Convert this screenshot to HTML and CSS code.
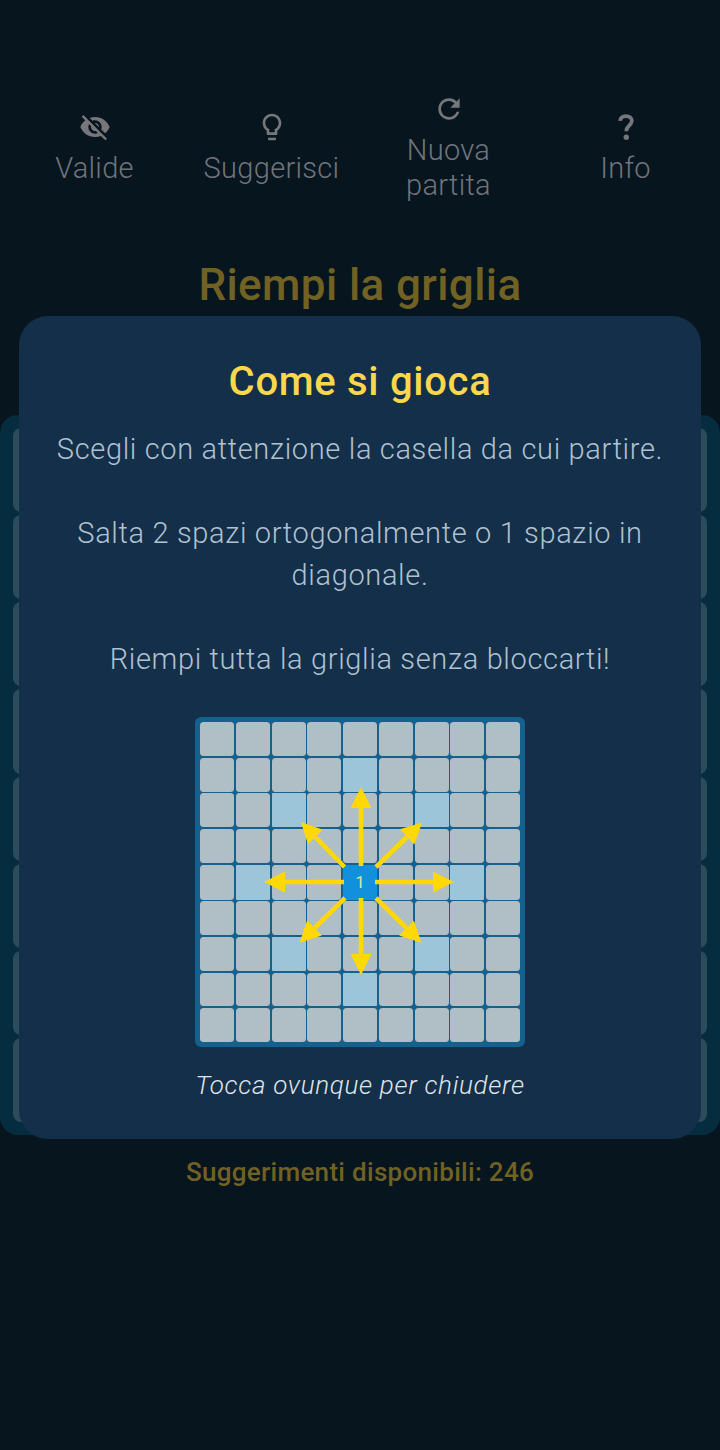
FILE: index.html
```html
<!DOCTYPE html>
<html lang="it">
<head>
    <meta charset="UTF-8">
    <meta name="viewport" content="width=device-width, initial-scale=1.0">
    <title>Riempi la griglia</title>
    <link rel="stylesheet" href="styles.css">
</head>
<body>
    <div class="game">
        <div class="toolbar">
            <button class="tool">
                <svg class="icon" viewBox="0 0 24 24"><path d="M12 7c2.76 0 5 2.24 5 5 0 .65-.13 1.26-.36 1.83l2.92 2.92c1.51-1.26 2.7-2.89 3.43-4.75-1.73-4.39-6-7.5-11-7.5-1.4 0-2.74.25-3.98.7l2.16 2.16C10.74 7.13 11.35 7 12 7zM2 4.27l2.28 2.28.46.46C3.08 8.3 1.78 10.02 1 12c1.73 4.39 6 7.5 11 7.5 1.55 0 3.03-.3 4.38-.84l.42.42L19.73 22 21 20.73 3.27 3 2 4.27zM7.53 9.8l1.55 1.55c-.05.21-.08.43-.08.65 0 1.66 1.34 3 3 3 .22 0 .44-.03.65-.08l1.55 1.55c-.67.33-1.41.53-2.2.53-2.76 0-5-2.24-5-5 0-.79.2-1.53.53-2.2zm4.31-.78l3.15 3.15.02-.16c0-1.66-1.34-3-3-3l-.17.01z"/></svg>
                <span>Valide</span>
            </button>
            <button class="tool">
                <svg class="icon" viewBox="0 0 24 24"><path d="M9 21c0 .55.45 1 1 1h4c.55 0 1-.45 1-1v-1H9v1zm3-19C8.14 2 5 5.14 5 9c0 2.38 1.19 4.47 3 5.74V17c0 .55.45 1 1 1h6c.55 0 1-.45 1-1v-2.26c1.81-1.27 3-3.36 3-5.74 0-3.86-3.14-7-7-7zm2.85 11.1l-.85.6V16h-4v-2.3l-.85-.6C7.8 12.16 7 10.63 7 9c0-2.76 2.24-5 5-5s5 2.24 5 5c0 1.63-.8 3.16-2.15 4.1z"/></svg>
                <span>Suggerisci</span>
            </button>
            <button class="tool">
                <svg class="icon" viewBox="0 0 24 24"><path d="M17.65 6.35C16.2 4.9 14.21 4 12 4c-4.42 0-7.99 3.58-7.99 8s3.57 8 7.99 8c3.73 0 6.84-2.55 7.73-6h-2.08c-.82 2.33-3.04 4-5.65 4-3.31 0-6-2.69-6-6s2.69-6 6-6c1.66 0 3.14.69 4.22 1.78L13 11h7V4l-2.35 2.35z"/></svg>
                <span>Nuova<br>partita</span>
            </button>
            <button class="tool">
                <svg class="icon" viewBox="0 0 24 24"><path class="question" d="M7.6 7.4C7.8 4.9 9.6 3.8 12 3.8c2.6 0 4.4 1.400 4.4 3.600 0 3.100-4.200 3.800-4.200 7.700"/><circle cx="12.200" cy="19.700" r="2"/></svg>
                <span>Info</span>
            </button>
        </div>
        <h1 class="title">Riempi la griglia</h1>
        <div class="board" id="board"></div>
        <p class="hints">Suggerimenti disponibili: 246</p>
    </div>

    <div class="overlay">
        <div class="dialog">
            <h2 class="dialog-title">Come si gioca</h2>
            <div class="dialog-text">
                <p>Scegli con attenzione la casella da cui partire.</p>
                <p>Salta 2 spazi ortogonalmente o 1 spazio in diagonale.</p>
                <p>Riempi tutta la griglia senza bloccarti!</p>
            </div>
            <div class="demo">
                <div class="demo-grid" id="demo"></div>
                <svg class="arrows" viewBox="0 0 330 330">
                    <defs>
                        <marker id="head" markerUnits="userSpaceOnUse" markerWidth="22" markerHeight="22" refX="0" refY="11" orient="auto">
                            <path d="M0 .5L21 11L0 21.5z"/>
                        </marker>
                    </defs>
                    <path class="arrow" d="M166 149V91"/>
                    <path class="arrow" d="M166 181V237"/>
                    <path class="arrow" d="M149 165H90"/>
                    <path class="arrow" d="M180 165H238"/>
                    <path class="arrow" d="M149.500 150L120.500 120"/>
                    <path class="arrow" d="M181 150L212 120"/>
                    <path class="arrow" d="M150 181L119.500 211"/>
                    <path class="arrow" d="M181 181L211.500 211"/>
                </svg>
            </div>
            <p class="dialog-close">Tocca ovunque per chiudere</p>
        </div>
    </div>

    <script>
        // Griglia di gioco 8x8
        var board = document.getElementById('board');
        for (var i = 0; i < 64; i++) {
            var cell = document.createElement('div');
            cell.className = 'cell';
            board.appendChild(cell);
        }

        // Griglia di esempio 9x9 con le caselle raggiungibili
        var demo = document.getElementById('demo');
        var valid = [13, 20, 24, 37, 43, 56, 60, 67];
        for (var j = 0; j < 81; j++) {
            var box = document.createElement('div');
            box.className = 'demo-cell';
            if (valid.indexOf(j) !== -1) {
                box.className += ' valid';
            }
            if (j === 40) {
                box.className += ' start';
                box.textContent = '1';
            }
            demo.appendChild(box);
        }
    </script>
</body>
</html>
```
FILE: styles.css
```css
* {
    box-sizing: border-box;
}
body {
    margin: 0;
    height: 1450px;
    position: relative;
    overflow: hidden;
    background-color: #07151f;
    font-family: Roboto, sans-serif;
    text-align: center;
}
h1, h2, p {
    margin: 0;
}
.toolbar {
    display: grid;
    grid-template-columns: repeat(4, 1fr);
    height: 210px;
    padding: 86px 6px 0;
}
.tool {
    display: flex;
    flex-direction: column;
    align-items: center;
    justify-content: center;
    height: 124px;
    padding: 0;
    border: none;
    background: none;
    color: #6f747c;
    font-family: inherit;
    font-size: 29px;
    font-weight: 300;
    line-height: 35px;
    letter-spacing: 0.3px;
}
.icon {
    width: 32px;
    height: 32px;
    margin-bottom: 8px;
    fill: #77777b;
}
.question {
    fill: none;
    stroke: #77777b;
    stroke-width: 2.8;
}
.title {
    height: 205px;
    padding-top: 49px;
    color: #716122;
    font-size: 44px;
    font-weight: 500;
    line-height: 52px;
    letter-spacing: 0.4px;
}
.board {
    display: grid;
    grid-template-columns: repeat(8, 1fr);
    grid-template-rows: repeat(8, 1fr);
    gap: 3px;
    height: 720px;
    padding: 13px;
    border-radius: 18px;
    background-color: #062c40;
}
.cell {
    border-radius: 8px;
    background-color: #2c4c5b;
}
.hints {
    padding-top: 21px;
    color: #716122;
    font-size: 26px;
    font-weight: 500;
    line-height: 32px;
    letter-spacing: 0.3px;
}
.overlay {
    position: absolute;
    top: 0;
    left: 0;
    width: 100%;
    height: 100%;
    padding: 316px 19px 0;
}
.dialog {
    height: 823px;
    padding-top: 41px;
    border-radius: 29px;
    background-color: #132f49;
}
.dialog-title {
    color: #fad74b;
    font-size: 40px;
    font-weight: 500;
    line-height: 50px;
    letter-spacing: 0.7px;
}
.dialog-text {
    display: flex;
    flex-direction: column;
    gap: 42px;
    padding: 21px 30px 0;
    color: #b0c1d1;
    font-size: 29px;
    font-weight: 300;
    line-height: 42px;
    letter-spacing: 0.65px;
}
.demo {
    position: relative;
    width: 330px;
    height: 330px;
    margin: 37px auto 0;
}
.demo-grid {
    display: grid;
    grid-template-columns: repeat(9, 1fr);
    grid-template-rows: repeat(9, 1fr);
    gap: 1.75px;
    height: 100%;
    padding: 5px;
    border-radius: 6px;
    background-color: #15608d;
}
.demo-cell {
    border-radius: 3.5px;
    background-color: #b0bec5;
}
.demo-cell.valid {
    border-radius: 1px;
    background-color: #9dc5da;
}
.demo-cell.start {
    border-radius: 0;
    background-color: #1191dc;
    color: #c8ed9d;
    font-size: 17px;
    line-height: 35px;
}
.arrows {
    position: absolute;
    top: 0;
    left: 0;
    width: 330px;
    height: 330px;
    fill: #ffd805;
}
.arrow {
    fill: none;
    stroke: #ffd805;
    stroke-width: 4.6;
    marker-end: url(#head);
}
.dialog-close {
    padding-top: 20px;
    color: #e0e6ed;
    font-size: 26px;
    font-style: italic;
    font-weight: 300;
    line-height: 36px;
    letter-spacing: 0.7px;
}
```
